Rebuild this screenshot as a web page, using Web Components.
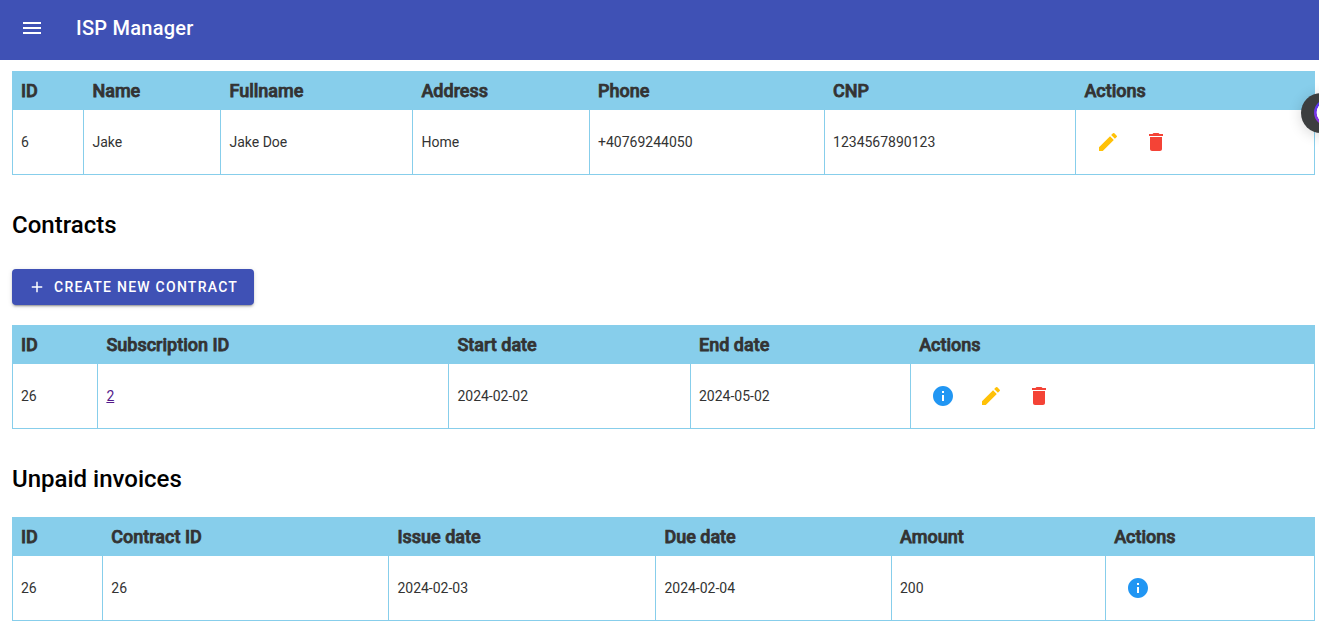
<!DOCTYPE html>
<html lang="en">
<head>
<meta charset="utf-8">
<title>ISP Manager</title>
<style>
html,body{margin:0;height:100%;overflow:hidden;background:#fff}
body{font-family:Roboto,"Liberation Sans",sans-serif;-webkit-font-smoothing:antialiased}
</style>
</head>
<body>
<isp-app></isp-app>
<script>
const define = (name, html) => {
  const t = document.createElement('template');
  t.innerHTML = html;
  customElements.define(name, class extends HTMLElement {
    constructor() {
      super();
      this.attachShadow({mode: 'open'}).append(t.content.cloneNode(true));
    }
  });
};

const PATHS = {
  menu: 'M3 18h18v-2H3v2zm0-5h18v-2H3v2zm0-7v2h18V6H3z',
  add: 'M19 13h-6v6h-2v-6H5v-2h6V5h2v6h6v2z',
  edit: 'M3 17.25V21h3.75L17.81 9.94l-3.75-3.75L3 17.25zM20.71 7.04a.996.996 0 0 0 0-1.41l-2.34-2.34a.996.996 0 0 0-1.41 0l-1.83 1.83 3.75 3.75 1.83-1.83z',
  delete: 'M6 19c0 1.1.9 2 2 2h8c1.1 0 2-.9 2-2V7H6v12zM19 4h-3.5l-1-1h-5l-1 1H5v2h14V4z',
  info: 'M12 2C6.48 2 2 6.48 2 12s4.48 10 10 10 10-4.48 10-10S17.52 2 12 2zm1 15h-2v-6h2v6zm0-8h-2V7h2v2z'
};
customElements.define('isp-icon', class extends HTMLElement {
  connectedCallback() {
    const root = this.shadowRoot || this.attachShadow({mode: 'open'});
    root.innerHTML = `<style>:host{display:block;width:24px;height:24px}svg{display:block;width:100%;height:100%;fill:currentColor}</style>
      <svg viewBox="0 0 24 24"><path d="${PATHS[this.getAttribute('name')]}"/></svg>`;
  }
});

define('top-bar', `<style>
  :host{display:flex;align-items:center;box-sizing:border-box;height:60px;padding:0 20px 4px;background:#3f51b5;color:#fff}
  .title{margin-left:32px;font-size:20px;font-weight:500;line-height:32px;letter-spacing:.25px}
</style><isp-icon name="menu"></isp-icon><span class="title"><slot></slot></span>`);

define('section-title', `<style>
  :host{display:block;color:#000}
  h2{margin:0;font-size:24px;font-weight:500;line-height:28px}
</style><h2><slot></slot></h2>`);

define('raised-button', `<style>
  :host{display:flex}
  button{display:flex;align-items:center;box-sizing:border-box;height:36px;padding:0 16px;border:0;border-radius:4px;background:#3f51b5;color:#fff;
    font:500 14px/36px Roboto,sans-serif;letter-spacing:1.25px;text-transform:uppercase;
    box-shadow:0 3px 1px -2px rgba(0,0,0,.2),0 2px 2px 0 rgba(0,0,0,.14),0 1px 5px 0 rgba(0,0,0,.12)}
  isp-icon{width:18px;height:18px;margin-right:8px}
</style><button><isp-icon name="add"></isp-icon><slot></slot></button>`);

define('icon-action', `<style>
  :host{display:block}
  button{display:block;width:48px;height:48px;padding:12px;border:0;background:none;color:inherit}
</style><button><slot></slot></button>`);

define('data-table', `<style>
  :host{display:block;border:1px solid skyblue;color:#333}
</style><slot></slot>`);

define('table-row', `<style>
  :host{display:grid;grid-template-columns:var(--cols);height:64px;font-size:14px}
  :host([head]){box-sizing:border-box;height:38px;padding-bottom:2px;background:skyblue;font-size:18px;font-weight:500;-webkit-text-stroke:.75px #333}
</style><slot></slot>`);

define('table-cell', `<style>
  :host{display:flex;align-items:center;padding:0 8px;border-left:1px solid skyblue;white-space:nowrap}
  :host(:first-child){border-left:0}
</style><slot></slot>`);

define('assist-bubble', `<style>
  :host{position:absolute;left:1301px;top:93px;width:40px;height:40px;border-radius:50%;background:#3c3e3f;box-shadow:0 2px 14px rgba(0,0,0,.16)}
  i{position:absolute;left:13px;top:6px;width:27px;height:27px;border-radius:50%;background:radial-gradient(circle,#fff 10.6px,transparent 11.2px),linear-gradient(#4a3af0,#9a35e0)}
</style><i></i>`);

const ACTION_COLORS = {info: '#2196f3', edit: '#ffc107', delete: '#f44336'};
const actions = (...names) => names.map(n =>
  `<icon-action style="color:${ACTION_COLORS[n]}"><isp-icon name="${n}"></isp-icon></icon-action>`).join('');
const table = (cols, head, row) => {
  const cells = list => list.map(c => `<table-cell>${c}</table-cell>`).join('');
  return `<data-table style="--cols:${cols}"><table-row head>${cells(head)}</table-row><table-row>${cells(row)}</table-row></data-table>`;
};

define('isp-app', `<style>
  :host{display:block}
  main{display:flex;flex-direction:column;padding:11px 4px 0 12px}
  section-title{margin:36px 0 24px}
  raised-button{margin:6px 0 20px}
  a{color:#551a8b}
</style>
<top-bar>ISP Manager</top-bar>
<main>
${table('70.45px 137px 192px 176.6px 235px 251.4px 1fr',
  ['ID', 'Name', 'Fullname', 'Address', 'Phone', 'CNP', 'Actions'],
  ['6', 'Jake', 'Jake Doe', 'Home', '+40769244050', '1234567890123', actions('edit', 'delete')])}
<section-title>Contracts</section-title>
<raised-button>Create new contract</raised-button>
${table('84.4px 351px 241.6px 220.2px 1fr',
  ['ID', 'Subscription ID', 'Start date', 'End date', 'Actions'],
  ['26', '<a href="#">2</a>', '2024-02-02', '2024-05-02', actions('info', 'edit', 'delete')])}
<section-title>Unpaid invoices</section-title>
${table('89.3px 286.1px 267px 235.6px 214.2px 1fr',
  ['ID', 'Contract ID', 'Issue date', 'Due date', 'Amount', 'Actions'],
  ['26', '26', '2024-02-03', '2024-02-04', '200', actions('info')])}
</main>
<assist-bubble></assist-bubble>`);
</script>
</body>
</html>
